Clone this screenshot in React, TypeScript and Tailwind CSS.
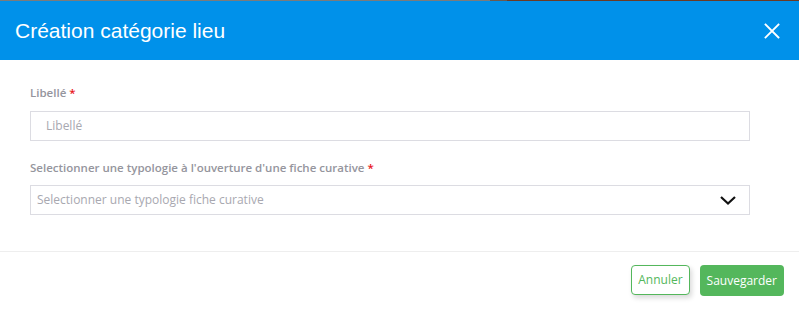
import React from "react";

export default function App() {
  return (
    <div className="w-[799px] h-[309px] bg-white overflow-hidden flex flex-col" style={{ fontFamily: '"Open Sans", sans-serif' }}>
      <div className="flex h-px">
        <div className="w-[490px] bg-[#7b7b7b]" />
        <div className="w-[17px] bg-[#6a5a50]" />
        <div className="flex-1 bg-[#6b3a24]" />
      </div>
      <div className="h-[59px] bg-[#0091ea] flex items-center justify-between pl-[15px] pr-[19px]">
        <h1 className="text-white text-[21px] leading-none" style={{ fontFamily: '"Liberation Sans", Arial, sans-serif' }}>
          Création catégorie lieu
        </h1>
        <svg width="16" height="16" viewBox="0 0 16 16" className="mt-[1px]">
          <path d="M1.5 1.5 L14.5 14.5 M14.5 1.5 L1.5 14.5" stroke="white" strokeWidth="1.8" strokeLinecap="square" />
        </svg>
      </div>
      <div className="flex flex-col px-[30px] pt-[25px] h-[192px] border-b border-[#eeeeee]">
        <label className="text-[11.5px] font-semibold text-[#95959d] leading-[16px]">
          Libellé <span className="text-[#e8141b]">*</span>
        </label>
        <div className="mt-[10px] w-[720px] h-[30px] border border-[#dcdce2] flex items-center pl-[15px] text-[12px] text-[#a8a8b0]">
          Libellé
        </div>
        <label className="mt-[19px] text-[11.5px] font-semibold text-[#95959d] leading-[16px]">
          Selectionner une typologie à l'ouverture d'une fiche curative <span className="text-[#e8141b]">*</span>
        </label>
        <div className="mt-[9px] w-[720px] h-[30px] border border-[#dcdce2] flex items-center justify-between pl-[6px] pr-[12px] text-[12px] text-[#a8a8b0]">
          <span>Selectionner une typologie fiche curative</span>
          <svg width="18" height="12" viewBox="0 0 18 12">
            <path d="M2 3 L9 9.5 L16 3" stroke="#111" strokeWidth="2.2" fill="none" />
          </svg>
        </div>
      </div>
      <div className="flex justify-end gap-[10px] pt-[13px] pr-[15px]">
        <button className="h-[30px] px-[6px] border border-[#54b75c] rounded-[4px] bg-white text-[#54b75c] text-[12px] shadow-[2px_3px_5px_rgba(0,0,0,0.15)]">
          Annuler
        </button>
        <button className="h-[31px] px-[7px] rounded-[4px] bg-[#54b75c] text-white text-[12px]">
          Sauvegarder
        </button>
      </div>
    </div>
  );
}
